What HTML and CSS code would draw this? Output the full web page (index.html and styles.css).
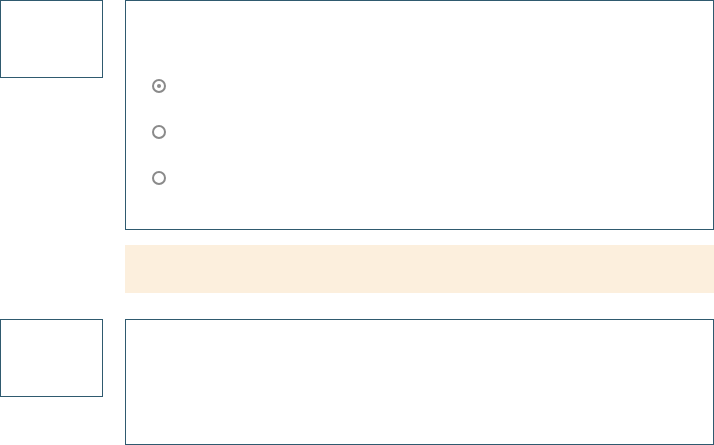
FILE: index.html
```html
<!DOCTYPE html>
<html>
<head>
<meta charset="utf-8">
<link rel="stylesheet" href="styles.css">
</head>
<body>
<div class="que">
  <div class="info"></div>
  <div class="content">
    <div class="formulation">
      <div class="answer">
        <div class="option"><span class="radio checked"></span></div>
        <div class="option"><span class="radio"></span></div>
        <div class="option"><span class="radio"></span></div>
      </div>
    </div>
    <div class="outcome"></div>
  </div>
</div>
<div class="que que-second">
  <div class="info"></div>
  <div class="content">
    <div class="formulation formulation-short"></div>
  </div>
</div>
</body>
</html>
```
FILE: styles.css
```css
html, body {
  margin: 0;
  padding: 0;
  background: #ffffff;
  font-family: "Liberation Sans", Arial, sans-serif;
}
.que {
  display: flex;
  align-items: flex-start;
  gap: 22px;
}
.que-second {
  margin-top: 26px;
}
.info {
  width: 103px;
  height: 78px;
  box-sizing: border-box;
  border: 1px solid #2f5a6f;
  flex: none;
}
.content {
  flex: 1;
  display: flex;
  flex-direction: column;
}
.formulation {
  box-sizing: border-box;
  height: 230px;
  border: 1px solid #2f5a6f;
  padding: 62px 0 0 26px;
}
.formulation-short {
  height: 126px;
  padding: 0;
}
.answer {
  display: flex;
  flex-direction: column;
}
.option {
  height: 46px;
  display: flex;
  align-items: center;
}
.radio {
  width: 14px;
  height: 14px;
  box-sizing: border-box;
  border: 2px solid #8a8a8a;
  border-radius: 50%;
  display: flex;
  align-items: center;
  justify-content: center;
}
.radio.checked::after {
  content: "";
  width: 4px;
  height: 4px;
  border-radius: 50%;
  background: #8a8a8a;
}
.outcome {
  margin-top: 15px;
  height: 48px;
  background: #fcefdd;
}
```
